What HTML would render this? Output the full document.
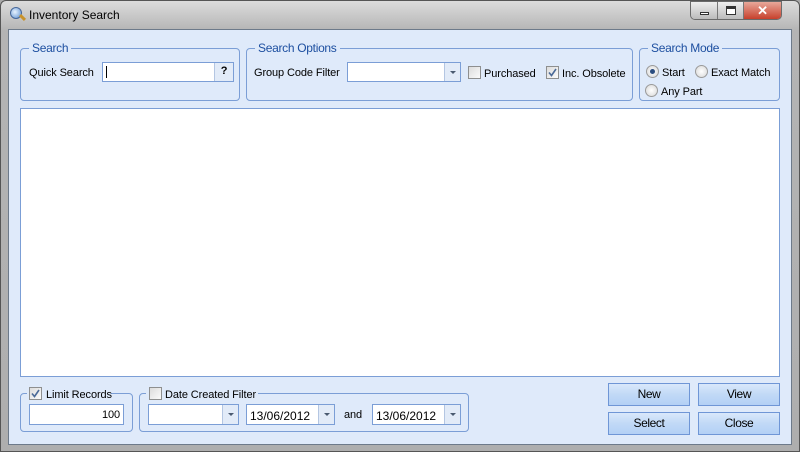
<!DOCTYPE html>
<html><head><style>
*{box-sizing:border-box;margin:0;padding:0}
body{width:800px;height:452px;overflow:hidden;background:#a9a9a9;font-family:"Liberation Sans",sans-serif;font-size:11px;letter-spacing:-0.1px;color:#000;position:relative}
.a{position:absolute}
#frame{left:0;top:0;width:800px;height:452px;border:1px solid #555;border-radius:6px 6px 0 0;background:linear-gradient(#dcdcdc,#b4b4b4 30px,#aeaeae)}
#client{left:8px;top:29px;width:784px;height:416px;background:#dfeafa;border:1px solid #6d7a8a}
.gb{position:absolute;border:1px solid #7b9ed6;border-radius:4px}
.gt{position:absolute;top:-8px;left:8px;background:#dfeafa;padding:0 3px;color:#1d4fa0;font-size:12px;letter-spacing:-0.3px}
.tb{position:absolute;background:#fff;border:1px solid #7b9ed6}
.cb{position:absolute;width:13px;height:13px;border:1px solid #8e8f8f;background:linear-gradient(135deg,#dcdcdc,#fbfbfb)}
.ck{position:absolute;width:13px;height:13px}
.dd{position:absolute;right:0;top:0;bottom:0;width:16px;background:#e2ebf8;border-left:1px solid #b4c6e2}
.dd:after{content:"";position:absolute;left:5px;top:8px;border:3px solid transparent;border-top:3px solid #4a5a70}
.rb{position:absolute;width:13px;height:13px;border-radius:50%;border:1px solid #9a9a9a;background:radial-gradient(#fff,#d6d6d6)}
.btn{position:absolute;width:82px;height:23px;border:1px solid #6f96d6;background:linear-gradient(#d9e8fb,#c1d9f6 50%,#b3d0f5);text-align:center;line-height:21px;color:#000;font-size:12px;letter-spacing:-0.4px}
</style></head><body>
<div id="frame" class="a"></div>
<div class="a" style="left:10px;top:7px;width:12px;height:12px;border-radius:50%;background:radial-gradient(circle at 40% 40%,#e6f2ff,#5b8fd0);border:1px solid #47689a"></div>
<div class="a" style="left:19px;top:16px;width:7px;height:3px;background:#c8922a;transform:rotate(45deg)"></div>
<div class="a" style="left:29px;top:8px;font-size:12px;letter-spacing:0">Inventory Search</div>
<div class="a" style="left:690px;top:1px;width:92px;height:19px;border:1px solid #6a6a6a;border-radius:0 0 5px 5px;overflow:hidden;display:flex">
 <div style="width:27px;background:linear-gradient(#eee,#bbb);border-right:1px solid #777;position:relative"><div class="a" style="left:9px;top:10px;width:9px;height:3px;background:#fff;border:1px solid #333"></div></div>
 <div style="width:26px;background:linear-gradient(#eee,#bbb);border-right:1px solid #777;position:relative"><div class="a" style="left:8px;top:4px;width:10px;height:9px;border:1px solid #333;border-top-width:3px;background:#fff"></div></div>
 <div style="flex:1;background:linear-gradient(#e8a89a,#c7402c);color:#fff;text-align:center;font-weight:bold;font-size:13px;line-height:17px">✕</div>
</div>
<div id="client" class="a"></div>

<div class="gb" style="left:20px;top:48px;width:220px;height:53px"><span class="gt">Search</span></div>
<div class="a" style="left:29px;top:67px">Quick Search</div>
<div class="tb" style="left:102px;top:62px;width:132px;height:20px"><div class="a" style="left:3px;top:3px;width:1px;height:12px;background:#000"></div><div class="a" style="right:0;top:0;width:19px;height:18px;background:#e2ebf8;border-left:1px solid #b4c6e2;text-align:center;line-height:17px;font-weight:bold;font-size:11px">?</div></div>

<div class="gb" style="left:246px;top:48px;width:387px;height:53px"><span class="gt">Search Options</span></div>
<div class="a" style="left:254px;top:67px">Group Code Filter</div>
<div class="tb" style="left:347px;top:62px;width:114px;height:20px"><div class="dd"></div></div>
<div class="cb" style="left:468px;top:66px"></div><div class="a" style="left:484px;top:68px">Purchased</div>
<div class="cb" style="left:546px;top:66px"></div><svg class="ck" style="left:546px;top:66px" viewBox="0 0 13 13"><path d="M3 6.5 L5.5 9.5 L10 3" stroke="#4b6a98" stroke-width="1.6" fill="none"/></svg><div class="a" style="left:562px;top:68px">Inc. Obsolete</div>

<div class="gb" style="left:639px;top:48px;width:141px;height:53px"><span class="gt">Search Mode</span></div>
<div class="rb" style="left:646px;top:65px"></div><div class="a" style="left:650px;top:69px;width:5px;height:5px;border-radius:50%;background:#2b4d80"></div><div class="a" style="left:662px;top:67px">Start</div>
<div class="rb" style="left:695px;top:65px"></div><div class="a" style="left:711px;top:67px">Exact Match</div>
<div class="rb" style="left:645px;top:84px"></div><div class="a" style="left:661px;top:86px">Any Part</div>

<div class="a" style="left:20px;top:108px;width:760px;height:269px;background:#fff;border:1px solid #7b9ed6"></div>

<div class="gb" style="left:20px;top:393px;width:113px;height:39px"></div>
<div class="a" style="left:27px;top:386px;width:84px;height:14px;background:#dfeafa"></div>
<div class="cb" style="left:29px;top:387px"></div><svg class="ck" style="left:29px;top:387px" viewBox="0 0 13 13"><path d="M3 6.5 L5.5 9.5 L10 3" stroke="#4b6a98" stroke-width="1.6" fill="none"/></svg><div class="a" style="left:46px;top:389px">Limit Records</div>
<div class="tb" style="left:29px;top:404px;width:95px;height:21px;text-align:right;padding:4px 3px 0 0">100</div>

<div class="gb" style="left:139px;top:393px;width:330px;height:39px"></div>
<div class="a" style="left:146px;top:386px;width:112px;height:14px;background:#dfeafa"></div>
<div class="cb" style="left:149px;top:387px"></div><div class="a" style="left:165px;top:389px">Date Created Filter</div>
<div class="tb" style="left:148px;top:404px;width:91px;height:21px"><div class="dd"></div></div>
<div class="tb" style="left:246px;top:404px;width:89px;height:21px;padding:4px 0 0 3px;font-size:12px;letter-spacing:0">13/06/2012<div class="dd"></div></div>
<div class="a" style="left:344px;top:409px">and</div>
<div class="tb" style="left:372px;top:404px;width:89px;height:21px;padding:4px 0 0 3px;font-size:12px;letter-spacing:0">13/06/2012<div class="dd"></div></div>

<div class="btn" style="left:608px;top:383px">New</div>
<div class="btn" style="left:698px;top:383px">View</div>
<div class="btn" style="left:608px;top:412px">Select</div>
<div class="btn" style="left:698px;top:412px">Close</div>
</body></html>
